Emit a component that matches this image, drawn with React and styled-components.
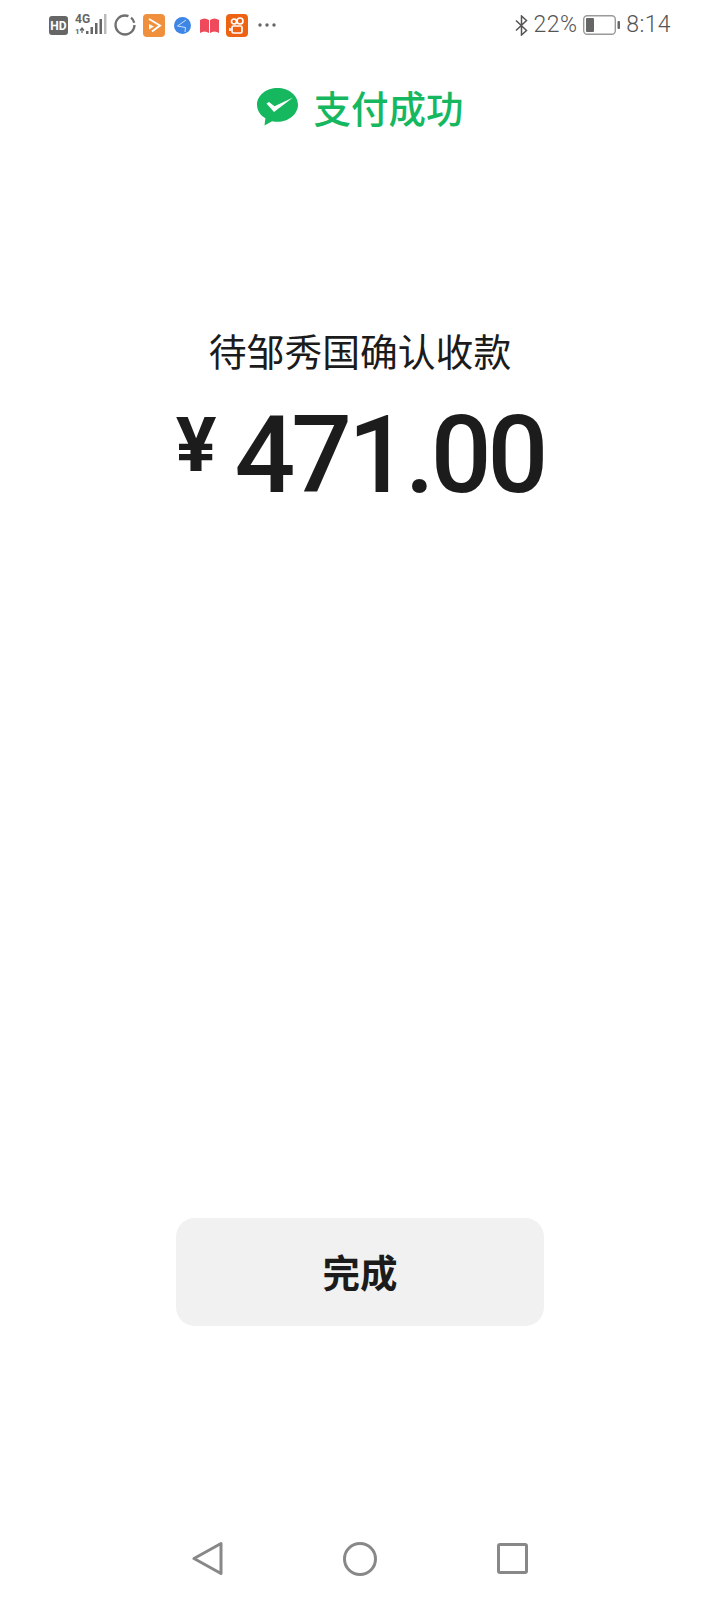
import styled, { createGlobalStyle } from 'styled-components';

const GlobalStyle = createGlobalStyle`
  html, body { margin: 0; padding: 0; background: #fff; }
  body { font-family: "Roboto", "Noto Sans CJK SC", sans-serif; }
`

const Page = styled.div`
  width: 720px;
  height: 1600px;
  display: flex;
  flex-direction: column;
  align-items: center;
  background-color: #fff;
  overflow: hidden;
`
const StatusBar = styled.div`
  width: 100%;
  box-sizing: border-box;
  height: 50px;
  padding: 0 49px 0 49px;
  display: flex;
  align-items: center;
  justify-content: space-between;
`
const StatusGroup = styled.div`
  display: flex;
  align-items: center;
  gap: ${props => props.gap || 0}px;
`
const StatusText = styled.span`
  font-family: "Roboto", sans-serif;
  font-size: 23px;
  line-height: 28px;
  font-weight: 300;
  color: #555;
  letter-spacing: 0.4px;
`
const Header = styled.div`
  margin-top: 35px;
  height: 44px;
  display: flex;
  align-items: center;
  gap: 16px;
`
const HeaderTitle = styled.div`
  font-family: "Noto Sans CJK SC", sans-serif;
  font-size: 37.5px;
  line-height: 44px;
  font-weight: 500;
  color: #15b85f;
`
const Label = styled.div`
  margin-top: 193px;
  font-family: "Noto Sans CJK SC", sans-serif;
  font-size: 37.8px;
  line-height: 56px;
  font-weight: 400;
  color: #1b1b1b;
`
const Amount = styled.div`
  margin-top: 23px;
  display: flex;
  align-items: flex-start;
  color: #1c1c1c;
`
const Currency = styled.span`
  font-family: "Roboto", sans-serif;
  font-size: 76px;
  line-height: 88px;
  font-weight: 700;
  margin-right: 18px;
`
const Figure = styled.span`
  font-family: "Roboto", sans-serif;
  font-size: 107px;
  line-height: 110px;
  font-weight: 500;
  letter-spacing: -4px;
`
const DoneButton = styled.button`
  margin-top: 707px;
  width: 368px;
  height: 108px;
  border: none;
  border-radius: 19px;
  background-color: #f1f1f1;
  font-family: "Noto Sans CJK SC", sans-serif;
  font-size: 37.5px;
  font-weight: 700;
  color: #1b1b1b;
  padding: 0 0 4px;
`
const NavBar = styled.div`
  margin-top: auto;
  margin-bottom: 24px;
  display: flex;
  align-items: center;
  gap: 120px;
`

const Icon = styled.svg`
  display: block;
  flex: none;
`

const WeChatPay = () => (
  <Icon width="41" height="38" viewBox="0 0 41 38">
    <path fill="#15b85f" d="M20.5 0C9.2 0 0 7.5 0 16.8c0 5.6 3.3 10.5 8.4 13.5L7.500 37.500l7.600-4.300c1.700.4 3.500.6 5.400.6C31.800 33.800 41 26.200 41 16.800 41 7.500 31.800 0 20.500 0z" />
    <path fill="#fff" d="M9.500 15.500l2.500-1.500 5.500 4.300L36 9.500 17 24z" />
  </Icon>
)

const HdIcon = () => (
  <Icon width="19" height="19" viewBox="0 0 19 19">
    <rect width="19" height="19" rx="3" fill="#666" />
    <text x="9.500" y="14" textAnchor="middle" fontFamily="Roboto" fontSize="12" fontWeight="700" fill="#fff">HD</text>
  </Icon>
)

const SignalIcon = () => (
  <Icon width="32" height="24" viewBox="0 0 32 24">
    <text x="0" y="10" fontFamily="Roboto" fontSize="12" fontWeight="700" fill="#666">4G</text>
    <text x="0" y="21" fontFamily="Roboto" fontSize="8" fontWeight="700" fill="#666">1</text>
    <path d="M7 15v5M5 17.500l2-2.500 2 2.500" stroke="#666" strokeWidth="1.300" fill="none" />
    <rect x="11" y="18" width="2.500" height="3" fill="#666" />
    <rect x="15.500" y="14" width="2.500" height="7" fill="#666" />
    <rect x="20" y="10" width="2.500" height="11" fill="#666" />
    <rect x="24.500" y="6" width="2.500" height="15" fill="#666" />
    <rect x="29" y="1" width="2.500" height="20" fill="#bbb" />
  </Icon>
)

const RingIcon = () => (
  <Icon width="22" height="22" viewBox="0 0 22 22">
    <circle cx="11" cy="11" r="9.500" fill="none" stroke="#707070" strokeWidth="2.300" strokeDasharray="48 3 6 3" />
  </Icon>
)

const PlayerApp = () => (
  <Icon width="22" height="23" viewBox="0 0 22 23">
    <rect width="22" height="23" rx="4" fill="#f0903c" />
    <path d="M6 5l11 6.500-8 6" fill="none" stroke="#fff" strokeWidth="2" />
    <path d="M6 10l5 2.500-5 3z" fill="#fff" />
  </Icon>
)

const BlueApp = () => (
  <Icon width="20" height="17" viewBox="-2 0 20 17">
    <circle cx="8.500" cy="8.500" r="8.500" fill="#3d86e6" />
    <path d="M12 3L3.500 9l8 1.500L11 15" fill="none" stroke="#cfe2fa" strokeWidth="1" />
  </Icon>
)

const BookApp = () => (
  <Icon width="20" height="15" viewBox="-1 0 20 15">
    <path fill="#ee4a5c" d="M0 2c3-2 6-2 9 0v13c-3-2-6-2-9 0zM10 2c3-2 6-2 9 0v13c-3-2-6-2-9 0z" />
  </Icon>
)

const VideoApp = () => (
  <Icon width="22" height="23" viewBox="0 0 22 23">
    <rect width="22" height="23" rx="4" fill="#ee6214" />
    <circle cx="8" cy="7.500" r="2.500" fill="none" stroke="#fff" strokeWidth="1.700" />
    <circle cx="14" cy="7" r="3" fill="none" stroke="#fff" strokeWidth="1.700" />
    <rect x="6" y="12" width="10" height="7" rx="1.500" fill="none" stroke="#fff" strokeWidth="1.700" />
    <path d="M4 14v3" stroke="#fff" strokeWidth="1.700" />
  </Icon>
)

const MoreDots = () => (
  <Icon width="21" height="4" viewBox="-3 0 21 4">
    <circle cx="2" cy="2" r="1.700" fill="#666" />
    <circle cx="9" cy="2" r="1.700" fill="#666" />
    <circle cx="16" cy="2" r="1.700" fill="#666" />
  </Icon>
)

const BluetoothIcon = () => (
  <Icon width="13" height="21" viewBox="0 0 13 21">
    <path d="M1 5.500l10.500 10L6.500 20V1l5 4.500L1 15.500" fill="none" stroke="#555" strokeWidth="1.500" />
  </Icon>
)

const BatteryIcon = () => (
  <Icon width="37" height="20" viewBox="0 0 37 20">
    <rect x="0.700" y="0.700" width="31.600" height="18.600" rx="3.500" fill="none" stroke="#999" strokeWidth="1.400" />
    <rect x="3" y="3" width="8" height="14" rx="1" fill="#666" />
    <rect x="34.500" y="6" width="2.500" height="8" rx="1" fill="#666" />
  </Icon>
)

const BackIcon = () => (
  <Icon width="31" height="35" viewBox="0 0 31 35">
    <path d="M29 2.500v30L2 17.500z" fill="none" stroke="#888" strokeWidth="3" strokeLinejoin="round" />
  </Icon>
)

const HomeIcon = () => (
  <Icon width="34" height="34" viewBox="0 0 34 34">
    <circle cx="17" cy="17" r="15.500" fill="none" stroke="#888" strokeWidth="3" />
  </Icon>
)

const RecentIcon = () => (
  <Icon width="31" height="31" viewBox="0 0 31 31">
    <rect x="1.500" y="1.500" width="28" height="28" rx="1.500" fill="none" stroke="#888" strokeWidth="3" />
  </Icon>
)

const App = () => {
  return (
    <Page>
      <GlobalStyle />
      <StatusBar>
        <StatusGroup gap={7}>
          <HdIcon />
          <SignalIcon />
          <RingIcon />
          <PlayerApp />
          <BlueApp />
          <BookApp />
          <VideoApp />
          <MoreDots />
        </StatusGroup>
        <StatusGroup gap={6}>
          <BluetoothIcon />
          <StatusText>22%</StatusText>
          <BatteryIcon />
          <StatusText>8:14</StatusText>
        </StatusGroup>
      </StatusBar>

      <Header>
        <WeChatPay />
        <HeaderTitle>支付成功</HeaderTitle>
      </Header>

      <Label>待邹秀国确认收款</Label>
      <Amount>
        <Currency>¥</Currency>
        <Figure>471.00</Figure>
      </Amount>

      <DoneButton>完成</DoneButton>

      <NavBar>
        <BackIcon />
        <HomeIcon />
        <RecentIcon />
      </NavBar>
    </Page>
  )
}

export default App
